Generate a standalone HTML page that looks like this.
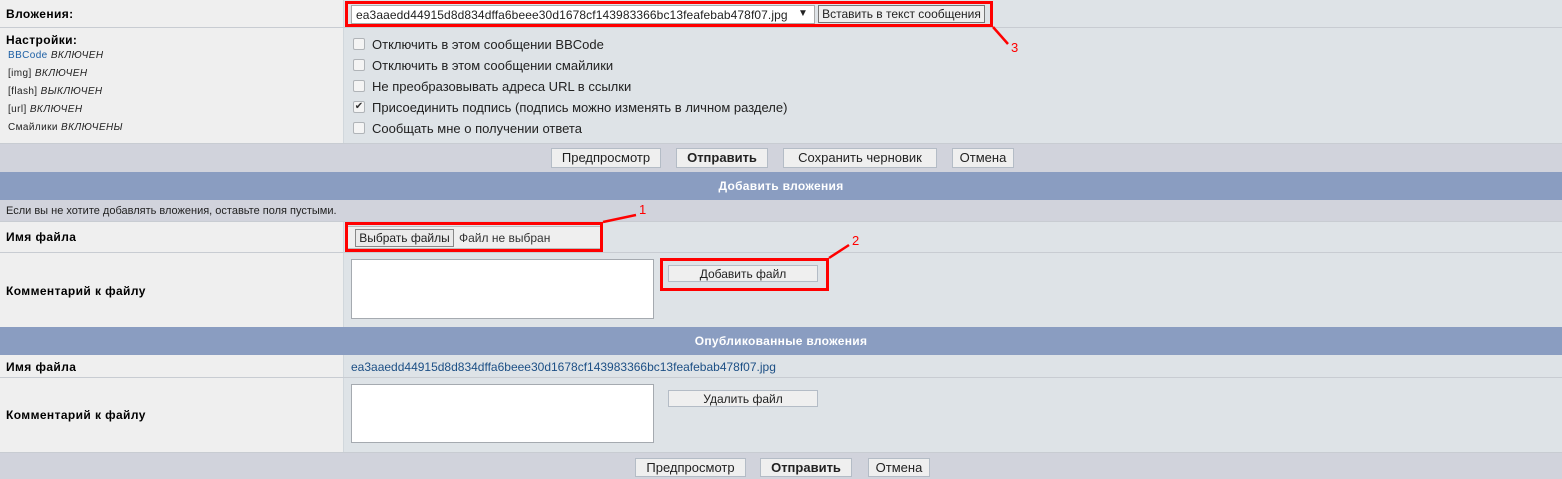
<!DOCTYPE html>
<html><head><meta charset="utf-8"><style>
*{box-sizing:border-box;margin:0;padding:0}
body{width:1562px;height:479px;position:relative;overflow:hidden;font-family:"Liberation Sans","DejaVu Sans",sans-serif;font-size:12px;color:#000;background:#dee3e7}
.a{position:absolute}
.L{background:#efefef;left:0;width:344px;border-right:1px solid #d1d7dc}
.R{background:#dee3e7;left:345px;right:0}
.line{left:0;right:0;height:1px;background:#c8ccd2}
.gray{background:#d1d3dc;left:0;right:0}
.hdr{background:#8a9dc1;left:0;right:0;color:#fff;font-weight:bold;font-size:12px;letter-spacing:.3px;text-align:center}
.b{font-weight:bold;font-size:12px;letter-spacing:.4px}
.btn{position:absolute;border:1px solid #b4bcc6;background:#efefef;font-size:13px;text-align:center;color:#222;line-height:17px}
.cb{position:absolute;left:353px;width:12px;height:12px;border:1px solid #b0b4b8;border-radius:2px;background:#f4f4f4}
.ct{position:absolute;left:372px;font-size:13px;color:#222}
.s{position:absolute;left:8px;font-size:10px;color:#222;letter-spacing:.4px}
.s i{font-style:italic}
.red{position:absolute;border:3px solid #f00}
.ta{position:absolute;background:#fff;border:1px solid #a5aab0}
</style></head><body>
<div class="a L" style="top:0;height:27px"></div><div class="a R" style="top:0;height:27px"></div>
<div class="a b" style="left:6px;top:7px">Вложения:</div>
<div class="a" style="left:351px;top:5px;width:464px;height:19px;background:#fff;border:1px solid #aaa;font-size:12px;padding:2px 4px;color:#222;letter-spacing:.1px">ea3aaedd44915d8d834dffa6beee30d1678cf143983366bc13feafebab478f07.jpg<span style="position:absolute;right:6px;top:2px;font-size:10px">▼</span></div>
<div class="btn" style="left:818px;top:5px;width:167px;height:18px;border-color:#777;font-size:12px">Вставить в текст сообщения</div>
<div class="red" style="left:345px;top:1px;width:648px;height:26px"></div>
<div class="a line" style="top:27px"></div>
<div class="a L" style="top:28px;height:115px"></div><div class="a R" style="top:28px;height:115px"></div>
<div class="a b" style="left:6px;top:33px">Настройки:</div>
<div class="s" style="top:50px"><span style="color:#1c5fa5">BBCode</span> <i>ВКЛЮЧЕН</i></div>
<div class="s" style="top:68px">[img] <i>ВКЛЮЧЕН</i></div>
<div class="s" style="top:86px">[flash] <i>ВЫКЛЮЧЕН</i></div>
<div class="s" style="top:104px">[url] <i>ВКЛЮЧЕН</i></div>
<div class="s" style="top:122px">Смайлики <i>ВКЛЮЧЕНЫ</i></div>
<div class="cb" style="top:38px"></div><div class="ct" style="top:37px">Отключить в этом сообщении BBCode</div>
<div class="cb" style="top:59px"></div><div class="ct" style="top:58px">Отключить в этом сообщении смайлики</div>
<div class="cb" style="top:80px"></div><div class="ct" style="top:79px">Не преобразовывать адреса URL в ссылки</div>
<div class="cb" style="top:101px;font-size:10px;line-height:10px;text-align:center;color:#333">✔</div><div class="ct" style="top:100px">Присоединить подпись (подпись можно изменять в личном разделе)</div>
<div class="cb" style="top:122px"></div><div class="ct" style="top:121px">Сообщать мне о получении ответа</div>
<div class="a line" style="top:143px"></div>
<div class="a gray" style="top:144px;height:28px"></div>
<div class="btn" style="left:551px;top:148px;width:110px;height:20px">Предпросмотр</div>
<div class="btn" style="left:676px;top:148px;width:92px;height:20px;font-weight:bold">Отправить</div>
<div class="btn" style="left:783px;top:148px;width:154px;height:20px">Сохранить черновик</div>
<div class="btn" style="left:952px;top:148px;width:62px;height:20px">Отмена</div>
<div class="a hdr" style="top:172px;height:28px;line-height:28px">Добавить вложения</div>
<div class="a gray" style="top:200px;height:21px"></div>
<div class="a" style="left:6px;top:205px;font-size:11px;color:#222">Если вы не хотите добавлять вложения, оставьте поля пустыми.</div>
<div class="a line" style="top:221px"></div>
<div class="a L" style="top:222px;height:30px"></div><div class="a R" style="top:222px;height:30px"></div>
<div class="a b" style="left:6px;top:230px">Имя файла</div>
<div class="a" style="left:347px;top:226px;width:254px;height:23px;background:#efefef;border:1px solid #bbb"></div>
<div class="btn" style="left:355px;top:229px;width:99px;height:18px;border-color:#888;background:#eaeaea;font-size:12px">Выбрать файлы</div>
<div class="a" style="left:459px;top:231px;font-size:12px;color:#333">Файл не выбран</div>
<div class="red" style="left:345px;top:222px;width:258px;height:30px"></div>
<div class="a line" style="top:252px"></div>
<div class="a L" style="top:253px;height:74px"></div><div class="a R" style="top:253px;height:74px"></div>
<div class="a b" style="left:6px;top:284px">Комментарий к файлу</div>
<div class="ta" style="left:351px;top:259px;width:303px;height:60px"></div>
<div class="btn" style="left:668px;top:265px;width:150px;height:17px;font-size:12px">Добавить файл</div>
<div class="red" style="left:660px;top:258px;width:169px;height:33px"></div>
<div class="a hdr" style="top:327px;height:28px;line-height:28px">Опубликованные вложения</div>
<div class="a L" style="top:355px;height:23px"></div><div class="a R" style="top:355px;height:23px"></div>
<div class="a b" style="left:6px;top:360px">Имя файла</div>
<div class="a" style="left:351px;top:360px;font-size:12px;color:#1c4f85">ea3aaedd44915d8d834dffa6beee30d1678cf143983366bc13feafebab478f07.jpg</div>
<div class="a line" style="top:377px"></div>
<div class="a L" style="top:378px;height:74px"></div><div class="a R" style="top:378px;height:74px"></div>
<div class="a b" style="left:6px;top:408px">Комментарий к файлу</div>
<div class="ta" style="left:351px;top:384px;width:303px;height:59px"></div>
<div class="btn" style="left:668px;top:390px;width:150px;height:17px;font-size:12px">Удалить файл</div>
<div class="a line" style="top:452px"></div>
<div class="a gray" style="top:453px;height:26px"></div>
<div class="btn" style="left:635px;top:458px;width:111px;height:19px">Предпросмотр</div>
<div class="btn" style="left:760px;top:458px;width:92px;height:19px;font-weight:bold">Отправить</div>
<div class="btn" style="left:868px;top:458px;width:62px;height:19px">Отмена</div>
<svg class="a" style="left:0;top:0" width="1562" height="479">
<g stroke="#f00" stroke-width="2.5" fill="none">
<line x1="993" y1="27" x2="1008" y2="44"/>
<line x1="603" y1="222" x2="636" y2="215"/>
<line x1="829" y1="258" x2="849" y2="245"/>
</g>
<g fill="#f00" font-family="Liberation Sans,sans-serif" font-size="13">
<text x="1011" y="52">3</text><text x="639" y="214">1</text><text x="852" y="245">2</text>
</g></svg>
</body></html>
